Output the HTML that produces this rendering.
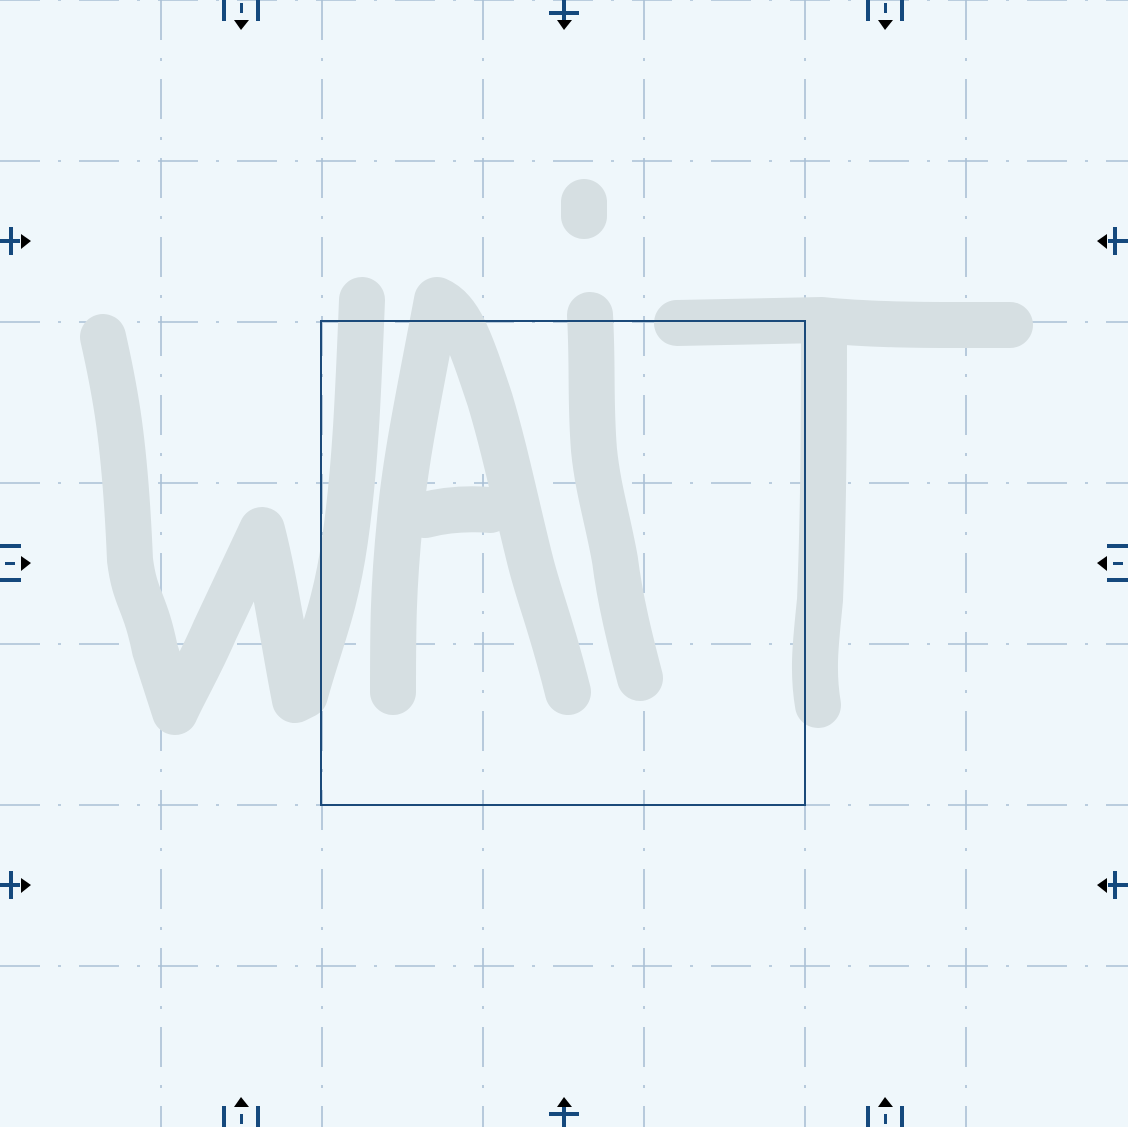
<!DOCTYPE html>
<html><head><meta charset="utf-8"><style>
html,body{margin:0;padding:0;background:#eff7fb;}
svg{display:block}
</style></head><body>
<svg width="1128" height="1127" viewBox="0 0 1128 1127" xmlns="http://www.w3.org/2000/svg">
<rect width="1128" height="1127" fill="#eff7fb"/>
<g stroke="#a9bfd5" stroke-width="1.6" stroke-dasharray="40,18,3,18" fill="none">
<line x1="161" y1="0" x2="161" y2="1127"/><line x1="322" y1="0" x2="322" y2="1127"/>
<line x1="483" y1="0" x2="483" y2="1127"/><line x1="644" y1="0" x2="644" y2="1127"/>
<line x1="805" y1="0" x2="805" y2="1127"/><line x1="966" y1="0" x2="966" y2="1127"/>
<line y1="161" x1="0" y2="161" x2="1128"/><line y1="322" x1="0" y2="322" x2="1128"/>
<line y1="483" x1="0" y2="483" x2="1128"/><line y1="644" x1="0" y2="644" x2="1128"/>
<line y1="805" x1="0" y2="805" x2="1128"/><line y1="966" x1="0" y2="966" x2="1128"/>
<line y1="0" x1="0" y2="0" x2="1128"/>
</g>
<g stroke="#d6dfe2" stroke-width="46" stroke-linecap="round" stroke-linejoin="round" fill="none">
<path d="M103,337 C115,390 125,440 130,560 C135,600 145,600 155,650 L175,712 C185,690 200,665 215,630 L262,530 C275,580 285,650 295,700 L305,695 C320,640 335,610 345,540 C355,470 358,400 362,300"/>
<path d="M393,692 C393,630 393,590 400,520 C405,460 420,390 437,300 C460,310 470,340 490,400 C505,450 515,500 530,560 C540,600 550,620 568,692"/>
<path d="M425,515 C445,510 465,508 490,510"/>
<path d="M584,202 L584,216"/>
<path d="M590,315 C593,370 590,400 594,450 C598,490 608,520 615,560 C620,600 630,640 640,678"/>
<path d="M677,323 C720,322 770,321 822,320 C880,326 950,325 1010,325"/>
<path d="M824,322 C824,400 824,500 820,600 C816,640 812,670 818,705"/>
</g>
<rect x="321" y="321" width="484" height="484" fill="none" stroke="#1b4a7a" stroke-width="2"/>
<g fill="#15497d">
<rect x="222" y="0" width="4" height="21"/><rect x="256" y="0" width="4" height="21"/><rect x="240" y="3" width="3" height="10"/>
<rect x="866" y="0" width="4" height="21"/><rect x="900" y="0" width="4" height="21"/><rect x="884" y="3" width="3" height="10"/>
<rect x="562" y="0" width="4" height="20"/><rect x="549" y="11" width="30" height="4"/>
<rect x="222" y="1106" width="4" height="21"/><rect x="256" y="1106" width="4" height="21"/><rect x="240" y="1114" width="3" height="10"/>
<rect x="866" y="1106" width="4" height="21"/><rect x="900" y="1106" width="4" height="21"/><rect x="884" y="1114" width="3" height="10"/>
<rect x="562" y="1107" width="4" height="20"/><rect x="549" y="1112" width="30" height="4"/>
<rect x="0" y="544" width="21" height="4"/><rect x="0" y="578" width="21" height="4"/><rect x="5" y="562" width="10" height="3"/>
<rect x="0" y="239" width="20" height="4"/><rect x="9" y="227" width="4" height="28"/>
<rect x="0" y="883" width="20" height="4"/><rect x="9" y="871" width="4" height="28"/>
<rect x="1107" y="544" width="21" height="4"/><rect x="1107" y="578" width="21" height="4"/><rect x="1113" y="562" width="10" height="3"/>
<rect x="1108" y="239" width="20" height="4"/><rect x="1113" y="227" width="4" height="28"/>
<rect x="1108" y="883" width="20" height="4"/><rect x="1113" y="871" width="4" height="28"/>
</g>
<g fill="#000">
<path d="M234,20 L249,20 L241,30 Z"/><path d="M878,20 L893,20 L885,30 Z"/><path d="M557,20 L572,20 L564,30 Z"/>
<path d="M234,1107 L249,1107 L241,1097 Z"/><path d="M878,1107 L893,1107 L885,1097 Z"/><path d="M557,1107 L572,1107 L564,1097 Z"/>
<path d="M21,556 L21,571 L31,563 Z"/><path d="M21,234 L21,249 L31,241 Z"/><path d="M21,878 L21,893 L31,885 Z"/>
<path d="M1107,556 L1107,571 L1097,563 Z"/><path d="M1107,234 L1107,249 L1097,241 Z"/><path d="M1107,878 L1107,893 L1097,885 Z"/>
</g>
</svg>
</body></html>
